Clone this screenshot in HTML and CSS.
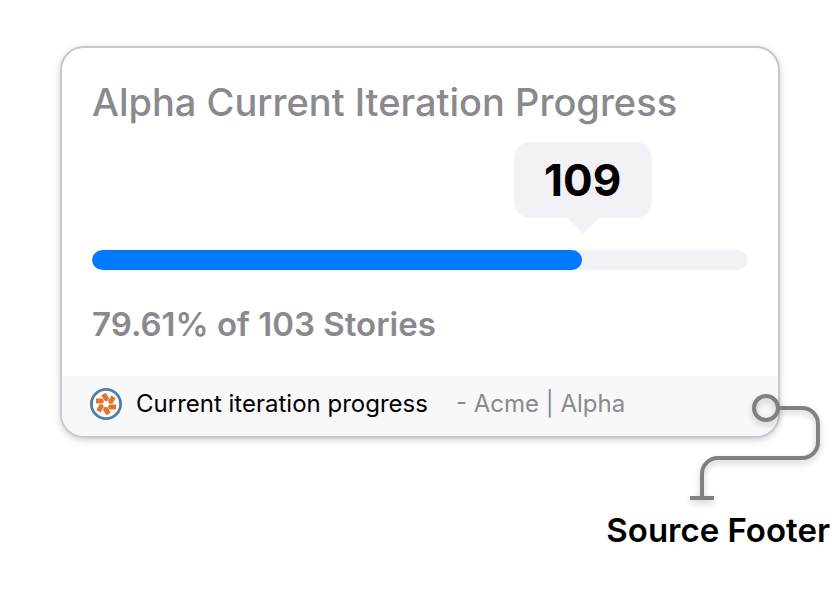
FILE: index.html
```html
<!DOCTYPE html>
<html lang="en">
<head>
    <meta charset="utf-8">
    <title>Alpha Current Iteration Progress</title>
    <link rel="stylesheet" href="styles.css">
</head>
<body>
    <main class="figure">
        <section class="card">
            <div class="card-body">
                <h1 class="card-title" id="card-title">Alpha Current Iteration Progress</h1>
                <div class="meter">
                    <div class="bubble" style="left: 74.8%">109</div>
                    <progress class="bar" value="74.7" max="100" aria-labelledby="card-title"></progress>
                </div>
                <p class="summary">79.61% of 103 Stories</p>
            </div>
            <footer class="card-footer">
                <svg class="source-icon" viewBox="-16 -16 32 32" aria-hidden="true">
                    <circle r="14.6" fill="#fff" stroke="#517ea5" stroke-width="2.8"/>
                    <g fill="#e0752b">
                        <path d="M-10-5.4h6.6l1.6 2.8-1.8 2.2H-10z"/>
                        <path d="M-10-5.4h6.6l1.6 2.8-1.8 2.2H-10z" transform="rotate(60)"/>
                        <path d="M-10-5.4h6.6l1.6 2.8-1.8 2.2H-10z" transform="rotate(120)"/>
                        <path d="M-10-5.4h6.6l1.6 2.8-1.8 2.2H-10z" transform="rotate(180)"/>
                        <path d="M-10-5.4h6.6l1.6 2.8-1.8 2.2H-10z" transform="rotate(240)"/>
                        <path d="M-10-5.4h6.6l1.6 2.8-1.8 2.2H-10z" transform="rotate(300)"/>
                    </g>
                </svg>
                <span class="source-name">Current iteration progress</span>
                <span class="source-path">- Acme | Alpha</span>
            </footer>
            <svg class="connector" viewBox="0 0 144 120" aria-hidden="true">
                <g fill="none" stroke="#808084" stroke-width="4">
                    <circle cx="82" cy="18" r="12"/>
                    <path d="M94 18h24a16 16 0 0 1 16 16v18a16 16 0 0 1-16 16H34a16 16 0 0 0-16 16v22"/>
                    <path d="M6 108h24"/>
                </g>
            </svg>
        </section>
        <p class="callout">Source Footer</p>
    </main>
</body>
</html>
```

FILE: styles.css
```css
body {
    margin: 0;
    background: #fff;
    color: #000;
    font-family: Inter, "Liberation Sans", sans-serif;
}

.figure {
    padding: 46px 10px 0 60px;
}

.card {
    position: relative;
    margin-right: 50px;
    border: 2px solid #c9c8d1;
    border-radius: 24px;
    background: #fff;
    box-shadow: 0 2px 6px rgba(0, 0, 0, 0.2);
}

.card-body {
    padding: 30px 30px 32px;
}

.card-title {
    margin: 0;
    color: #8a8a8e;
    font-size: 38px;
    font-weight: 500;
    line-height: 48px;
}

.meter {
    position: relative;
    padding-top: 124px;
}

.bubble {
    position: absolute;
    top: 16px;
    min-width: 78px;
    padding: 12px 30px;
    border-radius: 16px;
    background: #f2f1f6;
    font-size: 44px;
    font-weight: 700;
    line-height: 52px;
    text-align: center;
    transform: translateX(-50%);
}

.bubble::after {
    content: "";
    position: absolute;
    top: 100%;
    left: 50%;
    margin-left: -16px;
    border: 16px solid transparent;
    border-top-color: #f2f1f6;
    border-bottom: 0;
}

.bar {
    display: block;
    width: 100%;
    height: 20px;
    border: 0;
    border-radius: 10px;
    background: #f2f1f6;
    overflow: hidden;
    appearance: none;
}

.bar::-webkit-progress-bar {
    background: #f2f1f6;
}

.bar::-webkit-progress-value {
    border-radius: 10px;
    background: #007aff;
}

.bar::-moz-progress-bar {
    border-radius: 10px;
    background: #007aff;
}

.summary {
    margin: 34px 0 0;
    color: #8a8a8e;
    font-size: 33px;
    font-weight: 600;
    line-height: 40px;
}

.card-footer {
    display: flex;
    align-items: center;
    padding: 12px 28px 16px;
    border-radius: 0 0 22px 22px;
    background: #f8f8fb;
    font-size: 24px;
    line-height: 32px;
}

.source-icon {
    width: 32px;
    height: 32px;
    margin-right: 14px;
}

.source-path {
    margin-left: 28px;
    color: #8a8a8e;
}

.connector {
    position: absolute;
    right: -50px;
    bottom: -74px;
    width: 144px;
    height: 120px;
    filter: drop-shadow(0 3px 3px rgba(0, 0, 0, 0.2));
}

.callout {
    margin: 72px 0 0;
    font-size: 33px;
    font-weight: 600;
    line-height: 40px;
    text-align: right;
}
```
